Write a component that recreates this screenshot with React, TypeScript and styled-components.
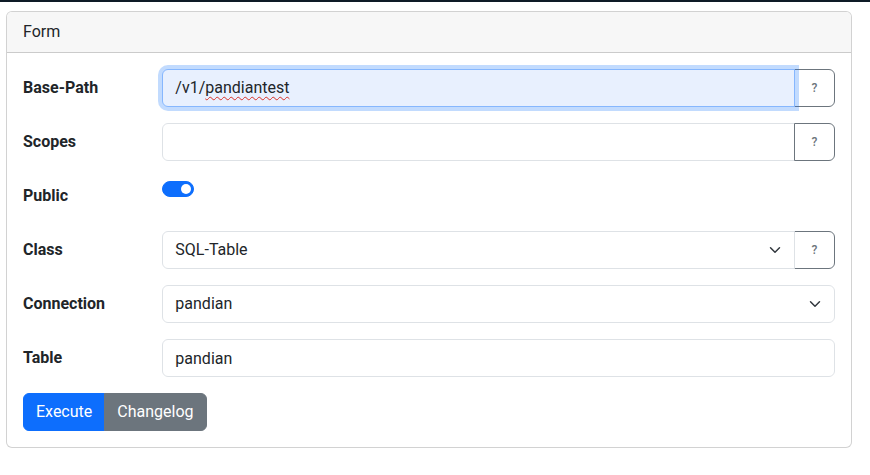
import React from "react";
import styled, { createGlobalStyle, css } from "styled-components";

const Global = createGlobalStyle`
  html, body { margin: 0; padding: 0; background: #fff; }
  body {
    font-family: Roboto, "Liberation Sans", Arial, sans-serif;
    font-size: 16px;
    line-height: 1.5;
    color: #212529;
  }
  * { box-sizing: border-box; }
`;

const TopBar = styled.div`
  height: 2px;
  background: #0e1b26;
`;

const Page = styled.div`
  padding: 9px 18px 0 6px;
`;

const Card = styled.div`
  border: 1px solid rgba(0, 0, 0, 0.175);
  border-radius: 6px;
  background: #fff;
  overflow: hidden;
`;

const CardHeader = styled.div`
  padding: 8px 16px;
  background: #f7f7f7;
  border-bottom: 1px solid rgba(0, 0, 0, 0.175);
`;

const CardBody = styled.div`
  padding: 16px;
`;

const FormRow = styled.div`
  display: grid;
  grid-template-columns: calc((100% + 24px) / 6 - 24px) 1fr;
  column-gap: 24px;
  margin-bottom: 16px;
`;

const Label = styled.label`
  padding: 7px 0;
  font-weight: 700;
  line-height: 24px;
`;

const InputGroup = styled.div`
  display: flex;
  align-items: stretch;
  position: relative;
`;

const controlBase = css`
  display: block;
  width: 100%;
  height: 38px;
  padding: 6px 12px;
  font-family: inherit;
  font-size: 16px;
  line-height: 24px;
  color: #212529;
  background: #fff;
  border: 1px solid #dee2e6;
  border-radius: 6px;
  outline: none;
`;

const FakeInput = styled.div<{ $focused?: boolean; $grouped?: boolean }>`
  ${controlBase}
  flex: 1 1 auto;
  min-width: 0;
  position: relative;
  ${(p) => p.$grouped && css`
    border-top-right-radius: 0;
    border-bottom-right-radius: 0;
  `}
  ${(p) => p.$focused && css`
    z-index: 5;
    background: #e8f0fe;
    border-color: #86b7fe;
    box-shadow: 0 0 0 4px rgba(13, 110, 253, 0.25);
  `}
`;

const Misspelled = styled.span`
  text-decoration: underline wavy #d93025;
  text-decoration-thickness: 1px;
  text-underline-offset: 3px;
`;

const TextInput = styled.input<{ $grouped?: boolean }>`
  ${controlBase}
  flex: 1 1 auto;
  min-width: 0;
  ${(p) => p.$grouped && css`
    border-top-right-radius: 0;
    border-bottom-right-radius: 0;
  `}
`;

const SelectWrap = styled.div`
  position: relative;
  flex: 1 1 auto;
  min-width: 0;
`;

const Select = styled.select<{ $grouped?: boolean }>`
  ${controlBase}
  appearance: none;
  -webkit-appearance: none;
  padding-right: 36px;
  ${(p) => p.$grouped && css`
    border-top-right-radius: 0;
    border-bottom-right-radius: 0;
  `}
`;

const Chevron = styled.svg`
  position: absolute;
  right: 12px;
  top: 13px;
  width: 16px;
  height: 12px;
  pointer-events: none;
`;

const HelpButton = styled.button`
  width: 41px;
  margin-left: -1px;
  flex: 0 0 auto;
  font-family: inherit;
  font-size: 12px;
  font-weight: 500;
  color: #6c757d;
  background: #fff;
  border: 1px solid #6c757d;
  border-radius: 0 6px 6px 0;
  padding: 0;
  cursor: pointer;
`;

const SwitchWrap = styled.div`
  min-height: 24px;
  padding-top: 4px;
`;

const Switch = styled.span<{ $on?: boolean }>`
  display: block;
  width: 32px;
  height: 16px;
  border-radius: 8px;
  background: ${(p) => (p.$on ? "#0d6efd" : "#fff")};
  border: 1px solid ${(p) => (p.$on ? "#0d6efd" : "#dee2e6")};
  position: relative;
  &::after {
    content: "";
    position: absolute;
    top: 2px;
    ${(p) => (p.$on ? "right: 2px;" : "left: 2px;")}
    width: 10px;
    height: 10px;
    border-radius: 50%;
    background: ${(p) => (p.$on ? "#fff" : "#bfbfbf")};
  }
`;

const ButtonGroup = styled.div`
  display: inline-flex;
`;

const Btn = styled.button<{ $variant: "primary" | "secondary" }>`
  font-family: inherit;
  font-size: 16px;
  line-height: 24px;
  padding: 6px 12px;
  color: #fff;
  border: 1px solid ${(p) => (p.$variant === "primary" ? "#0d6efd" : "#6c757d")};
  background: ${(p) => (p.$variant === "primary" ? "#0d6efd" : "#6c757d")};
  border-radius: 0;
  cursor: pointer;
  &:first-child { border-radius: 6px 0 0 6px; }
  &:last-child { border-radius: 0 6px 6px 0; }
  & + & { margin-left: -1px; }
`;

const ChevronIcon = () => (
  <Chevron viewBox="0 0 16 16">
    <path d="m2 5 6 6 6-6" fill="none" stroke="#343a40" strokeWidth="2" strokeLinecap="round" strokeLinejoin="round" />
  </Chevron>
);

export default function App() {
  return (
    <>
      <Global />
      <TopBar />
      <Page>
        <Card>
          <CardHeader>Form</CardHeader>
          <CardBody>
            <FormRow>
              <Label>Base-Path</Label>
              <InputGroup>
                <FakeInput $focused $grouped role="textbox">
                  /v1/<Misspelled>pandiantest</Misspelled>
                </FakeInput>
                <HelpButton>?</HelpButton>
              </InputGroup>
            </FormRow>
            <FormRow>
              <Label>Scopes</Label>
              <InputGroup>
                <TextInput $grouped defaultValue="" />
                <HelpButton>?</HelpButton>
              </InputGroup>
            </FormRow>
            <FormRow>
              <Label>Public</Label>
              <SwitchWrap>
                <Switch $on />
              </SwitchWrap>
            </FormRow>
            <FormRow>
              <Label>Class</Label>
              <InputGroup>
                <SelectWrap>
                  <Select $grouped defaultValue="SQL-Table">
                    <option>SQL-Table</option>
                  </Select>
                  <ChevronIcon />
                </SelectWrap>
                <HelpButton>?</HelpButton>
              </InputGroup>
            </FormRow>
            <FormRow>
              <Label>Connection</Label>
              <SelectWrap>
                <Select defaultValue="pandian">
                  <option>pandian</option>
                </Select>
                <ChevronIcon />
              </SelectWrap>
            </FormRow>
            <FormRow>
              <Label>Table</Label>
              <TextInput defaultValue="pandian" />
            </FormRow>
            <ButtonGroup>
              <Btn $variant="primary">Execute</Btn>
              <Btn $variant="secondary">Changelog</Btn>
            </ButtonGroup>
          </CardBody>
        </Card>
      </Page>
    </>
  );
}
